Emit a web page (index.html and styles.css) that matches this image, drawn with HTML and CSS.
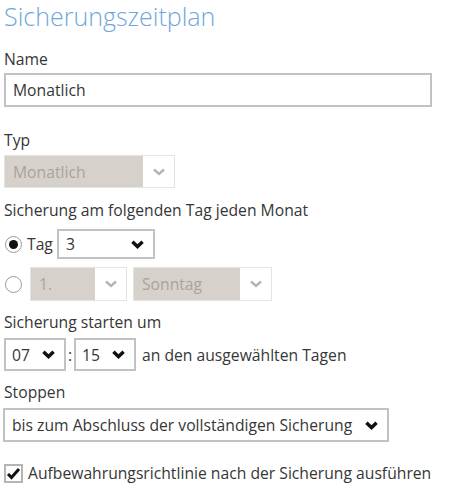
FILE: index.html
```html
<!DOCTYPE html>
<html lang="de">
<head>
    <meta charset="UTF-8">
    <title>Sicherungszeitplan</title>
    <link rel="stylesheet" href="styles.css">
</head>
<body>
    <h1 class="title">Sicherungszeitplan</h1>

    <!-- Name -->
    <div class="label label-name">Name</div>
    <input class="text-input" type="text" value="Monatlich">

    <!-- Typ -->
    <div class="label label-typ">Typ</div>
    <div class="select disabled select-typ">
        <span class="value">Monatlich</span>
        <span class="arrow"><svg width="12" height="8" viewBox="0 0 12 8"><polyline points="1,1.5 6,6 11,1.5" /></svg></span>
    </div>

    <!-- Tag im Monat -->
    <div class="label label-day">Sicherung am folgenden Tag jeden Monat</div>
    <div class="row row-tag">
        <span class="radio checked"></span>
        <span class="radio-text">Tag</span>
        <div class="select select-tag">
            <span class="value">3</span>
            <span class="chev"><svg width="13" height="9" viewBox="0 0 13 9"><polyline points="1.4,1.8 6.5,6.6 11.6,1.8" /></svg></span>
        </div>
    </div>
    <div class="row row-week">
        <span class="radio"></span>
        <div class="select disabled select-nr">
            <span class="value">1.</span>
            <span class="arrow"><svg width="12" height="8" viewBox="0 0 12 8"><polyline points="1,1.5 6,6 11,1.5" /></svg></span>
        </div>
        <div class="select disabled select-wd">
            <span class="value">Sonntag</span>
            <span class="arrow"><svg width="12" height="8" viewBox="0 0 12 8"><polyline points="1,1.5 6,6 11,1.5" /></svg></span>
        </div>
    </div>

    <!-- Startzeit -->
    <div class="label label-start">Sicherung starten um</div>
    <div class="row row-time">
        <div class="select select-time">
            <span class="value">07</span>
            <span class="chev"><svg width="13" height="9" viewBox="0 0 13 9"><polyline points="1.4,1.8 6.5,6.6 11.6,1.8" /></svg></span>
        </div>
        <span class="colon">:</span>
        <div class="select select-time">
            <span class="value">15</span>
            <span class="chev"><svg width="13" height="9" viewBox="0 0 13 9"><polyline points="1.4,1.8 6.5,6.6 11.6,1.8" /></svg></span>
        </div>
        <span class="time-text">an den ausgewählten Tagen</span>
    </div>

    <!-- Stoppen -->
    <div class="label label-stop">Stoppen</div>
    <div class="select select-stop">
        <span class="value">bis zum Abschluss der vollständigen Sicherung</span>
        <span class="chev"><svg width="13" height="9" viewBox="0 0 13 9"><polyline points="1.4,1.8 6.5,6.6 11.6,1.8" /></svg></span>
    </div>

    <div class="row row-check">
        <span class="checkbox"><svg width="15" height="13" viewBox="0 0 15 13"><polyline points="2,7 5.5,10.5 13,2" /></svg></span>
        <span class="check-text">Aufbewahrungsrichtlinie nach der Sicherung ausführen</span>
    </div>
</body>
</html>
```

FILE: styles.css
```css
html, body {
    margin: 0;
    padding: 0;
    background-color: #fff;
}
body {
    padding: 0 4px;
    font-family: "Open Sans", sans-serif;
    font-size: 15.7px;
    line-height: 20px;
    color: #363636;
}

.title {
    margin: 0;
    padding-top: 1px;
    font-size: 25px;
    font-weight: 300;
    line-height: 30px;
    color: #6fa6dc;
}

.label {
    height: 20px;
}
.label-name { margin-top: 18px; }
.label-typ { margin-top: 23px; }
.label-day { margin-top: 12px; }
.label-start { margin-top: 11px; }
.label-stop { margin-top: 11px; }

.text-input {
    display: block;
    box-sizing: border-box;
    width: 428px;
    height: 34px;
    margin: 4px 0 0 0;
    padding: 0 7px;
    border: 2px solid #c2c2c2;
    font-family: "Open Sans", sans-serif;
    font-size: 15.7px;
    color: #363636;
    outline: none;
}

/* Auswahlfelder */
.select {
    display: flex;
    align-items: center;
    box-sizing: border-box;
    border: 2px solid #c2c2c2;
    background-color: #fff;
}
.select .value {
    flex: 1;
    padding-left: 7px;
    white-space: nowrap;
}
.select .chev {
    display: flex;
    padding-right: 9px;
}
.select .chev polyline {
    fill: none;
    stroke: #111;
    stroke-width: 3.4;
}

.select.disabled {
    border: 1px solid #e6e4e0;
    background-color: #d6d2cb;
}
.select.disabled .value {
    color: #a9a49c;
    padding-left: 8px;
}
.select.disabled .arrow {
    display: flex;
    align-items: center;
    justify-content: center;
    width: 31px;
    align-self: stretch;
    background-color: #fff;
}
.select.disabled .arrow polyline {
    fill: none;
    stroke: #b4b4b4;
    stroke-width: 2.4;
}

.select-typ {
    width: 171px;
    height: 33px;
    margin-top: 5px;
}

.row {
    display: flex;
    align-items: center;
}
.row-tag {
    margin-top: 9px;
}
.row-week {
    margin-top: 8px;
}

.radio {
    box-sizing: border-box;
    width: 17px;
    height: 17px;
    margin-left: 1px;
    border: 1px solid #9a9a9a;
    border-radius: 50%;
    background-color: #fff;
    display: flex;
    align-items: center;
    justify-content: center;
}
.radio.checked::after {
    content: "";
    width: 9px;
    height: 9px;
    border-radius: 50%;
    background-color: #111;
}
.radio-text {
    margin-left: 5px;
    margin-right: 4px;
}

.select-tag {
    width: 98px;
    height: 30px;
}
.select-nr {
    width: 97px;
    height: 34px;
    margin-left: 8px;
}
.select-wd {
    width: 139px;
    height: 34px;
    margin-left: 6px;
}

.row-time {
    margin-top: 6px;
}
.select-time {
    width: 62px;
    height: 33px;
}
.select-time .value {
    padding-left: 6px;
}
.colon {
    width: 8px;
    text-align: center;
}
.time-text {
    margin-left: 6px;
}

.select-stop {
    width: 386px;
    height: 34px;
    margin-top: 6px;
    margin-left: -1px;
}

.row-check {
    margin-top: 21px;
}
.checkbox {
    box-sizing: border-box;
    width: 19px;
    height: 19px;
    border: 2px solid #b5b5b5;
    display: flex;
    align-items: center;
    justify-content: center;
}
.checkbox polyline {
    fill: none;
    stroke: #111;
    stroke-width: 3;
}
.check-text {
    margin-left: 5px;
}
```
